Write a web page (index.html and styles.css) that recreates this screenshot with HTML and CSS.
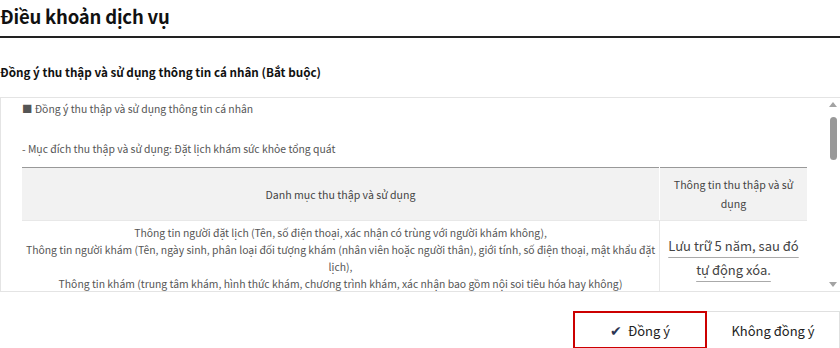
FILE: index.html
```html
<!DOCTYPE html>
<html lang="vi">
<head>
    <meta charset="UTF-8">
    <meta name="viewport" content="width=device-width, initial-scale=1.0">
    <title>Điều khoản dịch vụ</title>
    <link rel="stylesheet" href="styles.css">
</head>
<body>
    <h1 class="title">Điều khoản dịch vụ</h1>

    <h2 class="subtitle">Đồng ý thu thập và sử dụng thông tin cá nhân (Bắt buộc)</h2>

    <div class="terms-box">
        <div class="terms-content">
            <p class="terms-head">■ Đồng ý thu thập và sử dụng thông tin cá nhân</p>
            <p class="terms-line">- Mục đích thu thập và sử dụng: Đặt lịch khám sức khỏe tổng quát</p>
            <table class="terms-table">
                <thead>
                    <tr>
                        <th class="col-items">Danh mục thu thập và sử dụng</th>
                        <th class="col-period">Thông tin thu thập và sử dụng</th>
                    </tr>
                </thead>
                <tbody>
                    <tr>
                        <td class="col-items">
                            Thông tin người đặt lịch (Tên, số điện thoại, xác nhận có trùng với người khám không),<br>
                            Thông tin người khám (Tên, ngày sinh, phân loại đối tượng khám (nhân viên hoặc người thân), giới tính, số điện thoại, mật khẩu đặt lịch),<br>
                            Thông tin khám (trung tâm khám, hình thức khám, chương trình khám, xác nhận bao gồm nội soi tiêu hóa hay không)
                        </td>
                        <td class="col-period">
                            <span class="keep">Lưu trữ 5 năm, sau đó tự động xóa.</span>
                        </td>
                    </tr>
                </tbody>
            </table>
        </div>
        <div class="scrollbar">
            <span class="arrow-up"></span>
            <span class="thumb"></span>
            <span class="track"></span>
            <span class="arrow-down"></span>
        </div>
    </div>

    <div class="actions">
        <button class="btn btn-agree"><span class="check">✔</span> Đồng ý</button>
        <button class="btn btn-disagree">Không đồng ý</button>
    </div>
</body>
</html>
```

FILE: styles.css
```css
body {
    margin: 0;
    font-family: "Noto Sans CJK KR", "Noto Sans", sans-serif;
    color: #222;
    background-color: #fff;
}
.title {
    margin: 0;
    padding: 3px 0 6px;
    font-size: 18.5px;
    line-height: 27px;
    font-weight: 700;
    letter-spacing: -0.2px;
    color: #111;
    border-bottom: 2px solid #222;
}
.subtitle {
    margin: 24px 0 15px;
    font-size: 11.7px;
    line-height: 20px;
    font-weight: 700;
    color: #111;
}
.terms-box {
    display: flex;
    height: 193px;
    border-top: 1px solid #e4e4e4;
    border-left: 1px solid #e4e4e4;
    border-bottom: 1px solid #e4e4e4;
}
.terms-content {
    flex: 1;
    overflow: hidden;
    padding: 2px 19px 0 21px;
    font-size: 10.4px;
    line-height: 17px;
    color: #555;
}
.terms-content p {
    margin: 0;
}
.terms-head {
    margin-bottom: 23px !important;
}
.terms-line {
    margin-bottom: 10px !important;
}
.terms-table {
    width: 100%;
    border-collapse: collapse;
    border-top: 1px solid #999;
}
.terms-table th {
    background-color: #f2f2f2;
    font-size: 10.6px;
    font-weight: 400;
    color: #444;
    line-height: 19px;
    padding: 7px 12px;
    border-bottom: 1px solid #e8e8e8;
}
.terms-table th.col-period {
    border-left: 1px solid #fff;
}
.terms-table td {
    text-align: center;
    vertical-align: middle;
    padding: 3px 1px;
    color: #555;
}
.terms-table td.col-period {
    border-left: 1px solid #e8e8e8;
}
.col-period {
    width: 123px;
}
.keep {
    font-size: 13px;
    line-height: 24px;
    color: #444;
    text-decoration: underline;
    text-decoration-color: #aaa;
    text-underline-offset: 6px;
}
.scrollbar {
    width: 14px;
    display: flex;
    flex-direction: column;
    align-items: center;
    padding: 4px 0;
}
.arrow-up,
.arrow-down {
    width: 0;
    height: 0;
    border-left: 4px solid transparent;
    border-right: 4px solid transparent;
}
.arrow-up {
    border-bottom: 5px solid #a3a3a3;
}
.arrow-down {
    border-top: 5px solid #a3a3a3;
}
.thumb {
    width: 7px;
    height: 43px;
    margin-top: 10px;
    border-radius: 4px;
    background-color: #999;
}
.track {
    flex: 1;
}
.actions {
    display: flex;
    justify-content: flex-end;
    margin-top: 19px;
}
.btn {
    height: 38px;
    font-family: "Noto Sans CJK KR", "Noto Sans", sans-serif;
    font-size: 13px;
    color: #222;
    background-color: #fff;
    cursor: pointer;
}
.btn-agree {
    width: 134px;
    border: 2px solid #cc0000;
}
.btn-disagree {
    width: 133px;
    border: 1px solid #e0e0e0;
    border-left: none;
}
.check {
    color: #2b3553;
    font-size: 14px;
    margin-right: 3px;
}
```
